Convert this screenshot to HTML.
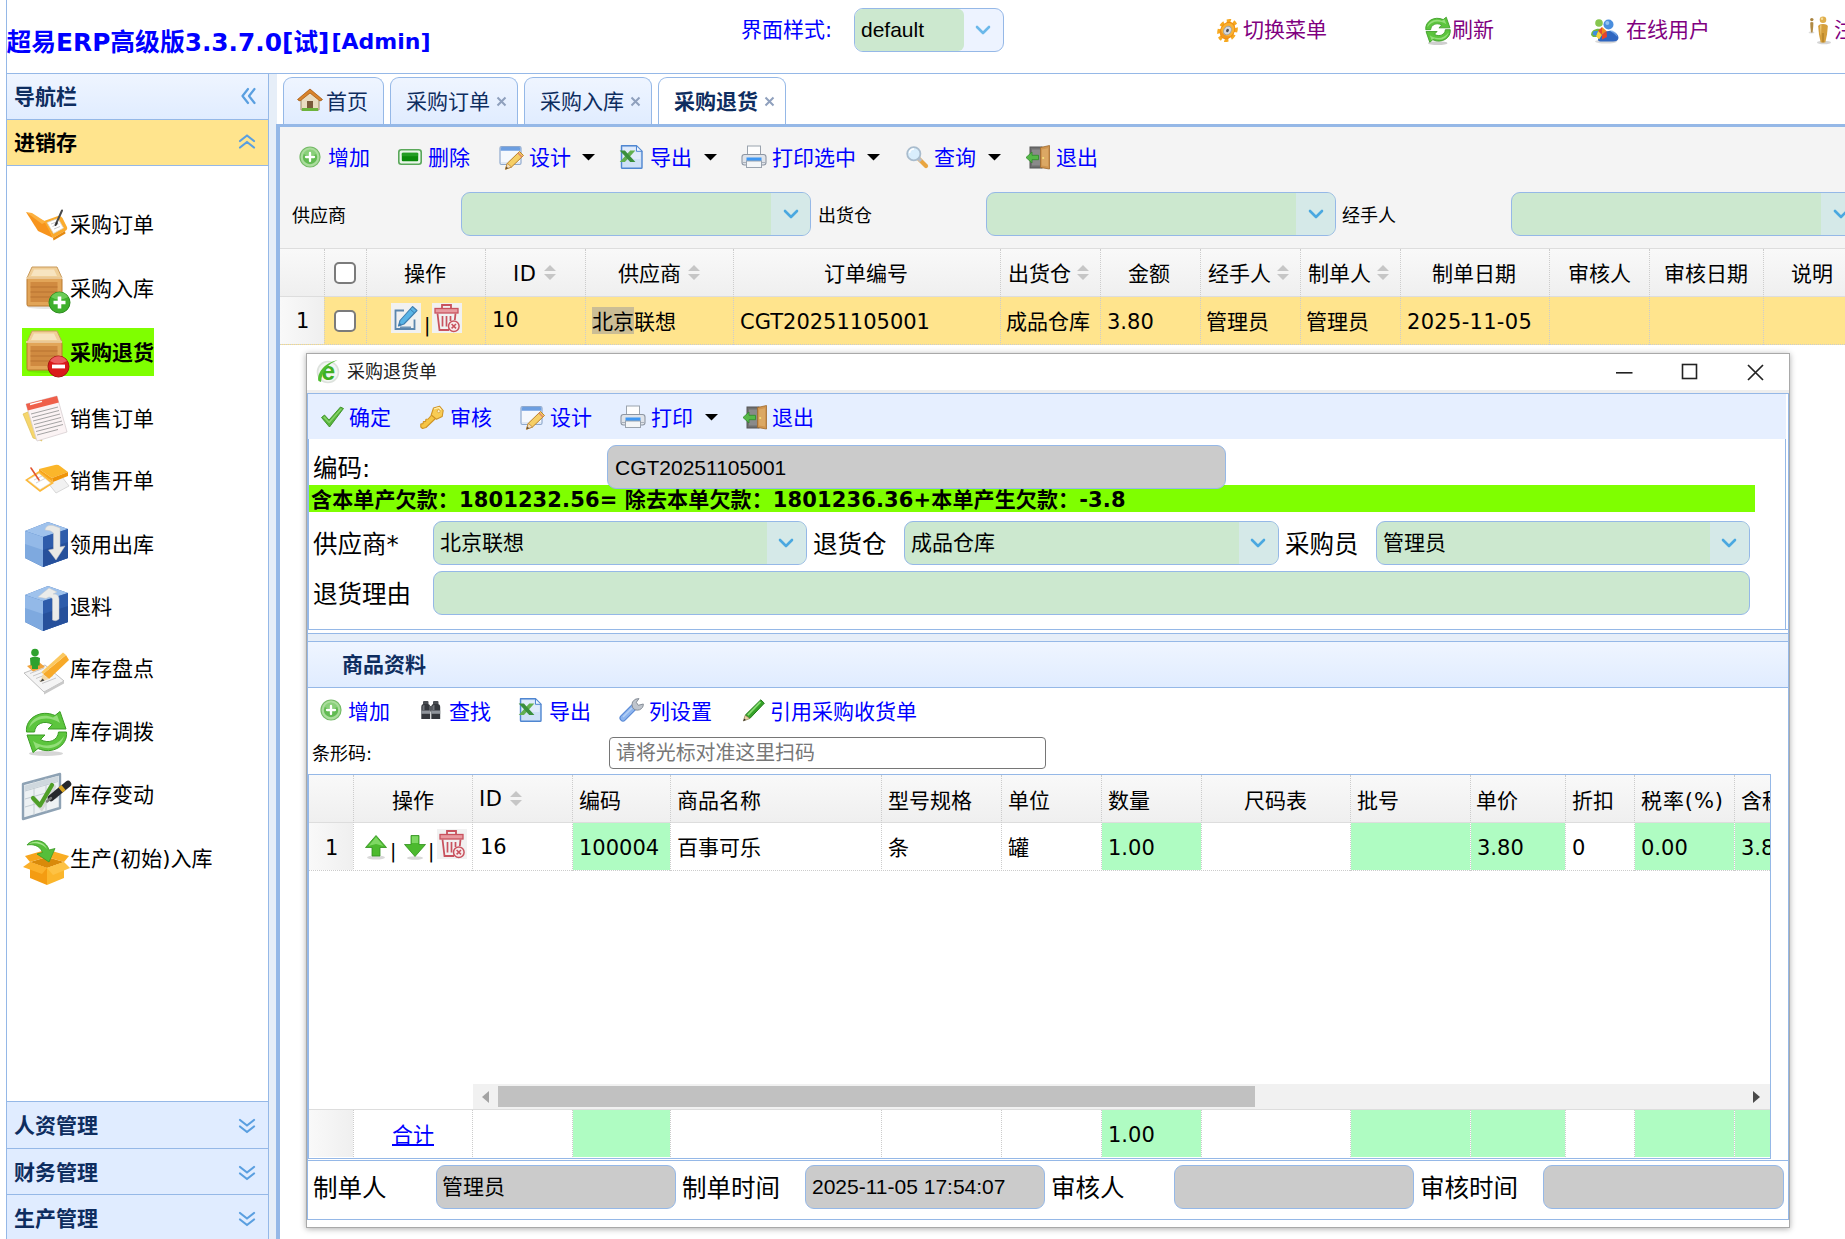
<!DOCTYPE html>
<html lang="zh-CN">
<head>
<meta charset="utf-8">
<title>超易ERP高级版</title>
<style>
*{box-sizing:border-box;margin:0;padding:0}
html,body{width:1845px;height:1239px;overflow:hidden;background:#fff}
body{position:relative;font-family:"DejaVu Sans","Noto Sans CJK SC",sans-serif;font-size:21px;color:#000;line-height:1}
.a{position:absolute}
.t{position:absolute;white-space:nowrap;line-height:1}
.ar{font-family:"Liberation Sans","Noto Sans CJK SC",sans-serif}
.b{font-weight:bold}
.blue{color:#0000ff}
.pur{color:#800080}
.nv{color:#0e2d5f}
svg{position:absolute;display:block;overflow:visible}
.acc{border-bottom:1px solid #95b8e7;background:linear-gradient(#eff5ff,#e0ecff)}
.tab{border:1px solid #95b8e7;border-bottom:none;border-radius:9px 9px 0 0;background:linear-gradient(#eff5ff,#e0ecff)}
.cb{border:1px solid #95b8e7;border-radius:9px;background:#cce8cf;overflow:hidden}
.gray{border:1px solid #95b8e7;border-radius:9px;background:#cbcbcb}
.gh{background:linear-gradient(#f9f9f9,#efefef)}
.vs{position:absolute;width:0;border-left:1px dotted #ccc}
.chk{border:2px solid #7b7b7b;border-radius:5px;background:#fff}
</style>
</head>
<body>
<!-- header -->
<div class="a" style="left:6px;top:0px;width:1px;height:1239px;background:#95b8e7"></div>
<div class="a" style="left:6px;top:73px;width:1839px;height:1px;background:#95b8e7"></div>
<div class="t b blue" style="left:6.5px;top:30.6px;font-size:24.8px;">超易ERP高级版3.3.7.0[试]</div>
<div class="t b blue" style="left:331.5px;top:31.4px;font-size:22px;">[Admin]</div>
<div class="t blue" style="left:741px;top:20.0px;font-size:21px;">界面样式:</div>
<div class="a cb" style="left:854px;top:8px;width:150px;height:44px;background:#edf3ff"><div class="a" style="left:0;top:0;width:109px;height:42px;background:#cce8cf;border-radius:0 6px 6px 0"></div></div>
<div class="t ar" style="left:861px;top:19.2px;font-size:21px;">default</div>
<svg style="left:975px;top:23.5px" width="16" height="12" viewBox="0 0 16 12"><path d="M2 3 L8 9 L14 3" fill="none" stroke="#6bb8ea" stroke-width="2.6" stroke-linecap="round" stroke-linejoin="round"/></svg>
<svg style="left:1215px;top:18px" width="25" height="25" viewBox="0 0 25 25"><g transform="translate(12.500 12.500) rotate(32) scale(.78 1)"><circle r="9" fill="none" stroke="#f6a81f" stroke-width="6.500" stroke-dasharray="4.100 2.970"/><circle r="8.600" fill="#f9b233"/><circle r="8.600" fill="none" stroke="#ee8f12" stroke-width="1.200"/><path d="M-8 2 A8.300 8.300 0 0 0 8 2 A9 6 0 0 1 -8 2Z" fill="#f08a14" opacity=".7"/><circle r="4.600" fill="#d5d8de" stroke="#9a9fa8" stroke-width="1"/><circle r="1.700" fill="#4a4d55"/></g></svg>
<div class="t pur" style="left:1243px;top:20.2px;font-size:21px;">切换菜单</div>
<svg style="left:1422.5px;top:14.5px" width="30" height="30" viewBox="0 0 49 49"><ellipse cx="24" cy="46" rx="16" ry="3" fill="#cfcfcf"/><path d="M4.500 24 C3 10 19 1 33 7.500 L38 3.500 L44 21 L26 21 L30.500 16.500 C22 11.500 13 16 12.500 24 Z" fill="#5cc53d" stroke="#3d9d27" stroke-width="1.400" stroke-linejoin="round"/><path d="M7 20 C9 10 20 5 31 9.500 L35 7 L38 15 C28 8 14 9 7 20Z" fill="#a6e58e" opacity=".75"/><g transform="rotate(180 24.500 24)"><path d="M4.500 24 C3 10 19 1 33 7.500 L38 3.500 L44 21 L26 21 L30.500 16.500 C22 11.500 13 16 12.500 24 Z" fill="#5cc53d" stroke="#3d9d27" stroke-width="1.400" stroke-linejoin="round"/><path d="M7 20 C9 10 20 5 31 9.500 L35 7 L38 15 C28 8 14 9 7 20Z" fill="#a6e58e" opacity=".75"/></g></svg>
<div class="t pur" style="left:1452px;top:20.2px;font-size:21px;">刷新</div>
<svg style="left:1589px;top:18px" width="30" height="26" viewBox="0 0 30 26"><ellipse cx="17" cy="23.500" rx="11" ry="2" fill="#d9d9d9"/><circle cx="10" cy="5" r="3.800" fill="#86c64e"/><path d="M2 17 C2 8.500 17 8.500 17 17 L15 19 L4 19 Z" fill="#72b83f"/><circle cx="19.500" cy="6.500" r="5" fill="#4a8ede"/><circle cx="18.300" cy="5" r="2" fill="#a8d0f5" opacity=".8"/><path d="M9 22 C8 11 29 10 29.500 20 Q29 23.500 24 23.500 L13 23.500 Q9.500 23.500 9 22Z" fill="#2f66c0"/><path d="M20 12 C25 12 28 15 28.500 19 C25 15 22 14 20 12Z" fill="#7fb2ee" opacity=".7"/><path d="M13 9 L9 13 L13 17Z" fill="#e64a2a"/><path d="M13 9 L17.500 13 L13 17Z" fill="#f28c1a"/><path d="M9 13 L13 17 L10 21.500 L7 18Z" fill="#f7d23a"/><path d="M13 17 L17.500 13 L18 19 L13 21.500Z" fill="#e8442a"/><path d="M4.500 13 L9 13 L7 18 L3.500 16.500Z" fill="#3f8fe0"/></svg>
<div class="t pur" style="left:1626px;top:20.2px;font-size:21px;">在线用户</div>
<svg style="left:1806px;top:16px" width="26" height="29" viewBox="0 0 26 29"><ellipse cx="18" cy="26.500" rx="7" ry="1.700" fill="#d5d5d5"/><ellipse cx="5.500" cy="16.500" rx="3" ry=".9" fill="#ddd"/><circle cx="5.800" cy="3.600" r="1.700" fill="#a8823e"/><path d="M4.200 6.500 Q5.800 5.500 7.400 6.500 L7.200 11 L6.600 16.500 L5 16.500 L4.400 11Z" fill="#b08a44"/><circle cx="17" cy="3.800" r="3.300" fill="#dfae4c"/><circle cx="16" cy="2.800" r="1.200" fill="#f6dc9a"/><path d="M12.200 10.500 Q12.200 8 17 8 Q21.800 8 21.800 10.500 L21 18.500 L19.300 26.500 L14.700 26.500 L13 18.500 Z" fill="#d59f3c"/><path d="M14 10 Q14 9 15.500 9 L15 20 L14.500 18Z" fill="#f3d387" opacity=".8"/><path d="M17 17 L17 26.500" stroke="#a4741f" stroke-width="1"/></svg>
<div class="t pur" style="left:1834px;top:20.2px;font-size:21px;">注销</div>
<!-- sidebar -->
<div class="a" style="left:268px;top:74px;width:1px;height:1165px;background:#95b8e7"></div>
<div class="a acc" style="left:7px;top:74px;width:261px;height:46px;"></div>
<div class="t b nv" style="left:14px;top:87.0px;font-size:21px;">导航栏</div>
<svg style="left:240px;top:87px" width="18" height="18" viewBox="0 0 18 18"><path d="M8 2 L2.500 9 L8 16 M14.500 2 L9 9 L14.500 16" fill="none" stroke="#5a9fe0" stroke-width="2.200" stroke-linejoin="round" stroke-linecap="round"/></svg>
<div class="a acc" style="left:7px;top:120px;width:261px;height:46px;background:#ffe48d"></div>
<div class="t b" style="left:14px;top:133.2px;font-size:21px;">进销存</div>
<svg style="left:238px;top:133px" width="18" height="18" viewBox="0 0 18 18"><path d="M2 8 L9 2.500 L16 8 M2 14.500 L9 9 L16 14.500" fill="none" stroke="#5a9fe0" stroke-width="2.200" stroke-linejoin="round" stroke-linecap="round"/></svg>
<div class="a" style="left:22px;top:328px;width:132px;height:48px;background:#7fff00"></div>
<div class="t " style="left:70px;top:215.4px;font-size:21px;">采购订单</div>
<div class="t " style="left:70px;top:278.5px;font-size:21px;">采购入库</div>
<div class="t b" style="left:70px;top:342.5px;font-size:21px;">采购退货</div>
<div class="t " style="left:70px;top:408.5px;font-size:21px;">销售订单</div>
<div class="t " style="left:70px;top:470.5px;font-size:21px;">销售开单</div>
<div class="t " style="left:70px;top:534.5px;font-size:21px;">领用出库</div>
<div class="t " style="left:70px;top:596.5px;font-size:21px;">退料</div>
<div class="t " style="left:70px;top:659.3px;font-size:21px;">库存盘点</div>
<div class="t " style="left:70px;top:722.1px;font-size:21px;">库存调拨</div>
<div class="t " style="left:70px;top:785.1px;font-size:21px;">库存变动</div>
<div class="t " style="left:70px;top:848.8px;font-size:21px;">生产(初始)入库</div>
<svg style="left:22px;top:200px" width="48" height="48" viewBox="0 0 48 48"><path d="M4 12 L24 22 L31 38 L16 31 Z" fill="#f7941d"/><path d="M4 12 L10 13 L24 22 L20 24 Z" fill="#fbb040"/><path d="M22 21 L36 16 Q39 15.5 40.5 18 L45 27 Q46 29.5 43 31 L31 38 Z" fill="#fbab2c"/><path d="M31 38 L43 31 L43.5 33.5 L31.5 40.5 Z" fill="#e58a12"/><path d="M25 22.5 L36 18.5 L41.5 28 L31.5 33.5 Z" fill="#fff" stroke="#d9d2c2" stroke-width=".8"/><path d="M29 24 L35 21.8 M30.5 26.5 L36.5 24 M32 29 L38 26.5" stroke="#bbb" stroke-width=".8"/><path d="M40 10.500 L33.500 25" stroke="#4a4a4a" stroke-width="2" stroke-linecap="round"/><path d="M34.600 22 L33 26.200 L36 23 Z" fill="#222"/></svg>
<svg style="left:22px;top:264px" width="48" height="48" viewBox="0 0 48 48"><ellipse cx="23" cy="42.500" rx="18" ry="2.500" fill="#e6e6e6"/><path d="M10 3 H35 L40 14 H5 Z" fill="#f0cf98" stroke="#c99a5b" stroke-width="1"/><path d="M12 5.5 H32 L35 12 H9 Z" fill="#f7e4c0"/><rect x="5" y="14" width="35" height="28" rx="1.500" fill="#e2a558" stroke="#b9782f" stroke-width="1"/><rect x="8.5" y="18" width="27" height="20" fill="#d08a40"/><path d="M8.5 23 H35.5 M8.5 28 H35.5 M8.5 33 H35.5" stroke="#b87330" stroke-width="1"/><path d="M4 14 H40" stroke="#f3d9ae" stroke-width="1.5"/><circle cx="37.5" cy="38.5" r="10.5" fill="#3fb02c" stroke="#2b8a1c" stroke-width="1"/><path d="M29 33 A10 10 0 0 1 46 33 Q37 38 29 33Z" fill="#7fd86a" opacity=".7"/><path d="M31.5 38.5 H43.5 M37.5 32.5 V44.5" stroke="#fff" stroke-width="3.6"/></svg>
<svg style="left:22px;top:328px" width="48" height="48" viewBox="0 0 48 48"><ellipse cx="23" cy="42.500" rx="18" ry="2.500" fill="#72e800"/><path d="M10 3 H35 L40 14 H5 Z" fill="#f0cf98" stroke="#c99a5b" stroke-width="1"/><path d="M12 5.5 H32 L35 12 H9 Z" fill="#f7e4c0"/><rect x="5" y="14" width="35" height="28" rx="1.500" fill="#e2a558" stroke="#b9782f" stroke-width="1"/><rect x="8.5" y="18" width="27" height="20" fill="#d08a40"/><path d="M8.5 23 H35.5 M8.5 28 H35.5 M8.5 33 H35.5" stroke="#b87330" stroke-width="1"/><path d="M4 14 H40" stroke="#f3d9ae" stroke-width="1.5"/><circle cx="36.5" cy="38.5" r="10.5" fill="#d91a1a" stroke="#a80f0f" stroke-width="1"/><path d="M28 33 A10 10 0 0 1 45 33 Q36 38 28 33Z" fill="#f47a7a" opacity=".7"/><path d="M30 38.5 H43" stroke="#fff" stroke-width="3.8"/></svg>
<svg style="left:22px;top:394px" width="48" height="48" viewBox="0 0 48 48"><path d="M1 20 L8 17 L20 47 L11 44 Z" fill="#f6d66c" stroke="#d9b84a" stroke-width=".6"/><path d="M4 10 L35 2 L45 38 L15 47 Z" fill="#fbf3f4" stroke="#d8cfd2" stroke-width=".8"/><path d="M4 10 L35 2 L36.8 8.4 L5.8 16.4 Z" fill="#ef5f4a"/><path d="M8 10.5 L20 7.4" stroke="#fff" stroke-width="1.4"/><g stroke="#9a9a9a" stroke-width=".9"><path d="M9 20 L36 13"/><path d="M10 23.5 L37 16.5"/><path d="M11 27 L38 20"/><path d="M12 30.5 L39 23.5"/><path d="M13 34 L40 27"/><path d="M14 37.500 L41 30.500"/><path d="M15 41 L36 35.500"/></g></svg>
<svg style="left:22px;top:456px" width="48" height="48" viewBox="0 0 48 48"><path d="M26 27 L40 21 L47 30 L34 37 Z" fill="#f1f1f1" stroke="#cfcfcf" stroke-width=".8"/><path d="M17 13 L33 9 Q36 8.300 38 10 L46 16 L30 22 Z" fill="#fbb62a"/><path d="M30 22 L46 16 L46 20 L31 26 Z" fill="#ef9408"/><path d="M17 13 L30 22 L31 26 L17 17 Z" fill="#f7a51a"/><path d="M3 24 L17 15 L32 27 L18 36 Z" fill="#fdb93a"/><path d="M6 24 L17 17.500 L28.500 27 L18 33.500 Z" fill="#fff" stroke="#e6e0d4" stroke-width=".6"/><path d="M12 24 L20 20 M14 27 L23 22.500" stroke="#c8c8c8" stroke-width=".8"/><path d="M9 12 L17 24" stroke="#e2552f" stroke-width="1.6" stroke-linecap="round"/></svg>
<svg style="left:22px;top:520px" width="48" height="48" viewBox="0 0 48 48"><path d="M3 11 L26 2 L46 9 L46 38 L21 47 L3 38 Z" fill="#3f6fba"/><path d="M3 11 L26 2 L46 9 L21 17 Z" fill="#9fc2ec"/><path d="M3 11 L21 17 L21 47 L3 38 Z" fill="#7ea9df"/><path d="M3 11 L21 17 L21 30 L3 24 Z" fill="#9cc0eb" opacity=".7"/><path d="M21 17 L46 9 L46 38 L21 47 Z" fill="#2e5cab"/><path d="M21 30 L46 22 L46 38 L21 47 Z" fill="#244d97" opacity=".8"/><path d="M23 10 Q24 4.500 31 5.500 L38 8 L38 27 L43 26 L34 40 L26.500 30 L31.500 29 L31.500 13 Q29 10 23 10 Z" fill="#e9e9e6" stroke="#c9c9c9" stroke-width=".5"/></svg>
<svg style="left:22px;top:584px" width="48" height="48" viewBox="0 0 48 48"><path d="M3 11 L26 2 L46 9 L46 38 L21 47 L3 38 Z" fill="#3f6fba"/><path d="M3 11 L26 2 L46 9 L21 17 Z" fill="#9fc2ec"/><path d="M3 11 L21 17 L21 47 L3 38 Z" fill="#7ea9df"/><path d="M3 11 L21 17 L21 30 L3 24 Z" fill="#9cc0eb" opacity=".7"/><path d="M21 17 L46 9 L46 38 L21 47 Z" fill="#2e5cab"/><path d="M21 30 L46 22 L46 38 L21 47 Z" fill="#244d97" opacity=".8"/><path d="M16 13 L27 4 L35 8 L31 10 Q37 10 37 15 L37 35 Q34 38 30.500 36 L30.500 15 Q30 13 27 13 L24 14.500 Z" fill="#ececea" stroke="#c9c9c9" stroke-width=".5"/></svg>
<svg style="left:22px;top:646px" width="48" height="48" viewBox="0 0 48 48"><path d="M2 27 L23 19 L42 35 L22 46 Z" fill="#f4f4f4" stroke="#b9b9b9" stroke-width=".9"/><path d="M22 46 L42 35 L42 37.500 L22 48.500 Z" fill="#c9c9c9"/><path d="M8 27.500 L22 22 M11 30 L25 24.500 M14 32.500 L28 27 M17 35 L31 29.500 M20 37.500 L34 32" stroke="#bdbdbd" stroke-width=".8"/><path d="M5 20 L17 16 L23 21 L11 25.500 Z" fill="#f0a23a"/><circle cx="13" cy="6.500" r="3.800" fill="#2da12d"/><path d="M8 12 Q13 9 18 12 L17.500 19.500 L16 19.500 L16 23 L10 23 L10 19.500 L8.500 19.500 Z" fill="#2da12d"/><path d="M44 9 L47 14 L27 33 L21 28 Z" fill="#f7a928"/><path d="M41 6.500 L44 9 L21 28 L19.500 26 Z" fill="#fbc860"/><path d="M21 28 L27 33 L18 36 Z" fill="#f3d9a8"/><path d="M18 36 L20.500 32.500 L22.500 34.500 Z" fill="#444"/></svg>
<svg style="left:22px;top:708px" width="48" height="48" viewBox="0 0 48 48"><ellipse cx="24" cy="45.500" rx="17" ry="2.500" fill="#d6d6d6"/><path d="M4.500 24 C3 10 19 1 33 7.500 L38 3.500 L44 21 L26 21 L30.500 16.500 C22 11.500 13 16 12.500 24 Z" fill="#5cc53d" stroke="#3d9d27" stroke-width="1" stroke-linejoin="round"/><path d="M7 20 C9 10 20 5 31 9.500 L35 7 L38 15 C28 8 14 9 7 20Z" fill="#a6e58e" opacity=".75"/><g transform="rotate(180 24.500 24)"><path d="M4.500 24 C3 10 19 1 33 7.500 L38 3.500 L44 21 L26 21 L30.500 16.500 C22 11.500 13 16 12.500 24 Z" fill="#5cc53d" stroke="#3d9d27" stroke-width="1" stroke-linejoin="round"/><path d="M7 20 C9 10 20 5 31 9.500 L35 7 L38 15 C28 8 14 9 7 20Z" fill="#a6e58e" opacity=".75"/></g></svg>
<svg style="left:22px;top:773px" width="48" height="48" viewBox="0 0 48 48"><path d="M1 11 L38 1 L38 35 L1 46 Z" fill="#edf1f3" stroke="#8ea2b4" stroke-width="2.400" stroke-linejoin="round"/><path d="M3 18 L36 8.500 M3 26 L36 16.500 M3 34 L36 24.500 M12 8.500 L12 42 M24 5 L24 38.500" stroke="#c3ccd3" stroke-width="1"/><path d="M3 12.500 L36 3 L36 8 L3 17.500Z" fill="#cfd8de"/><path d="M11 25 L18 32.500 L30 12" fill="none" stroke="#cfd3d0" stroke-width="5" stroke-linecap="round" opacity=".8" transform="translate(1.500 2)"/><path d="M11 25 L18 32.500 L30 12" fill="none" stroke="#4f9f28" stroke-width="4.200" stroke-linecap="round" stroke-linejoin="round"/><path d="M46 11 L29 25" stroke="#26282c" stroke-width="6.500" stroke-linecap="round"/><path d="M41.500 14.600 L38.500 17.100" stroke="#d9a522" stroke-width="6.500"/><path d="M29 25 L25 28.500" stroke="#777" stroke-width="2.500" stroke-linecap="round"/></svg>
<svg style="left:22px;top:838px" width="48" height="48" viewBox="0 0 48 48"><path d="M8 24 L25 19 L42 24 L25 30 Z" fill="#d98a0a"/><path d="M8 24 L25 30 L25 47 L8 40 Z" fill="#f49c12"/><path d="M25 30 L42 24 L42 40 L25 47 Z" fill="#fbb62c"/><path d="M8 24 L25 30 L20 36 L1 29 Z" fill="#fbb02a"/><path d="M25 30 L42 24 L48 30 L31 37 Z" fill="#fdc244"/><path d="M8 24 L25 19 L20 13 L3 18 Z" fill="#f7a51c"/><path d="M42 24 L25 19 L30 13 L47 18 Z" fill="#f9ad22"/><path d="M5 7 C10 0 24 1 27 12 L33 10.500 L27 24 L15 16 L20.500 14.500 C18 7 10 6 5 7 Z" fill="#56be3a" stroke="#3a9a25" stroke-width=".8" stroke-linejoin="round"/><path d="M7 6 C12 2 22 3 25 11 C20 5 12 4.500 7 6Z" fill="#a6e58e"/></svg>
<div class="a" style="left:7px;top:1101px;width:261px;height:48px;background:#e0ecff;border-top:1px solid #95b8e7;border-bottom:none"></div>
<div class="t b nv" style="left:14px;top:1116.0px;font-size:21px;">人资管理</div>
<svg style="left:238px;top:1117px" width="18" height="18" viewBox="0 0 18 18"><path d="M2 3 L9 8.500 L16 3 M2 9.500 L9 15 L16 9.500" fill="none" stroke="#5a9fe0" stroke-width="2.200" stroke-linejoin="round" stroke-linecap="round"/></svg>
<div class="a" style="left:7px;top:1148px;width:261px;height:47px;background:#e0ecff;border-top:1px solid #95b8e7;border-bottom:none"></div>
<div class="t b nv" style="left:14px;top:1163.0px;font-size:21px;">财务管理</div>
<svg style="left:238px;top:1164px" width="18" height="18" viewBox="0 0 18 18"><path d="M2 3 L9 8.500 L16 3 M2 9.500 L9 15 L16 9.500" fill="none" stroke="#5a9fe0" stroke-width="2.200" stroke-linejoin="round" stroke-linecap="round"/></svg>
<div class="a" style="left:7px;top:1194px;width:261px;height:46px;background:#e0ecff;border-top:1px solid #95b8e7;border-bottom:none"></div>
<div class="t b nv" style="left:14px;top:1209.0px;font-size:21px;">生产管理</div>
<svg style="left:238px;top:1210px" width="18" height="18" viewBox="0 0 18 18"><path d="M2 3 L9 8.500 L16 3 M2 9.500 L9 15 L16 9.500" fill="none" stroke="#5a9fe0" stroke-width="2.200" stroke-linejoin="round" stroke-linecap="round"/></svg>
<!-- tabs -->
<div class="a" style="left:269px;top:74px;width:8px;height:1165px;background:#e6eef8"></div>
<div class="a" style="left:276px;top:124px;width:4px;height:1115px;background:#95b8e7"></div>
<div class="a tab" style="left:283px;top:77px;width:101px;height:48px;"></div>
<svg style="left:297px;top:88px" width="26" height="24" viewBox="0 0 26 24"><path d="M13 2 L1 12 L4 12 L4 22 L22 22 L22 12 L25 12 Z" fill="#e9dcc0" stroke="#a08c66" stroke-width="1"/><path d="M13 1 L0.5 11.5 L3 13 L13 5 L23 13 L25.5 11.5 Z" fill="#d9832a" stroke="#a85a12" stroke-width=".8"/><rect x="10" y="13" width="6" height="9" fill="#7a5a3a"/><rect x="5" y="20" width="16" height="3" fill="#6db33c"/></svg>
<div class="t nv" style="left:326px;top:92.2px;font-size:21px;">首页</div>
<div class="a tab" style="left:390px;top:77px;width:128px;height:48px;"></div>
<div class="t nv" style="left:406px;top:92.2px;font-size:21px;">采购订单</div>
<svg style="left:496px;top:96px" width="11" height="11" viewBox="0 0 11 11"><path d="M1.5 1.5 L9.5 9.5 M9.5 1.5 L1.5 9.5" stroke="#8fa0bd" stroke-width="2" fill="none"/></svg>
<div class="a tab" style="left:524px;top:77px;width:128px;height:48px;"></div>
<div class="t nv" style="left:540px;top:92.2px;font-size:21px;">采购入库</div>
<svg style="left:630px;top:96px" width="11" height="11" viewBox="0 0 11 11"><path d="M1.5 1.5 L9.5 9.5 M9.5 1.5 L1.5 9.5" stroke="#8fa0bd" stroke-width="2" fill="none"/></svg>
<div class="a tab" style="left:658px;top:77px;width:128px;height:48px;background:#fff"></div>
<div class="t b nv" style="left:674px;top:92.2px;font-size:21px;">采购退货</div>
<svg style="left:764px;top:96px" width="11" height="11" viewBox="0 0 11 11"><path d="M1.5 1.5 L9.5 9.5 M9.5 1.5 L1.5 9.5" stroke="#8fa0bd" stroke-width="2" fill="none"/></svg>
<div class="a" style="left:277px;top:124px;width:1568px;height:3px;background:#95b8e7"></div>
<!-- toolbar -->
<div class="a" style="left:280px;top:127px;width:1565px;height:121px;background:#f4f4f4"></div>
<svg style="left:299px;top:145.5px" width="22" height="22" viewBox="0 0 22 22"><circle cx="11" cy="11" r="10" fill="#aadd9c" stroke="#74ba66" stroke-width="1.200"/><circle cx="11" cy="11" r="7.200" fill="#62bb52"/><path d="M4.500 8 A7 7 0 0 1 17.500 8 Q11 11 4.500 8Z" fill="#93d685" opacity=".8"/><path d="M7 11 H15 M11 7 V15" stroke="#fff" stroke-width="2.300" stroke-linecap="round"/></svg>
<svg style="left:398px;top:149px" width="24" height="16" viewBox="0 0 24 16"><rect x=".8" y=".8" width="22.400" height="14.400" rx="2.500" fill="#eaf6ea" stroke="#5aa85a" stroke-width="1.600"/><rect x="3.800" y="3.800" width="16.400" height="8.400" rx="1" fill="#0b8a0b"/><rect x="3.800" y="3.800" width="16.400" height="3.500" rx="1" fill="#2fa52f" opacity=".7"/></svg>
<svg style="left:498.5px;top:145px" width="25" height="25" viewBox="0 0 25 25"><rect x="1" y="1.500" width="21" height="18" rx="1.500" fill="#f5f8fd" stroke="#8fa9cd" stroke-width="1.200"/><path d="M1.600 3 Q1.600 2 3 2 H20 Q21.400 2 21.400 3 V5.800 H1.600Z" fill="#6c9ee0"/><path d="M2 17 H21 V19 H2Z" fill="#dfe8f5"/><path d="M20.500 6.500 L24.500 10.500 L12.500 22 L6.500 24.200 L8.300 18.300 Z" fill="#f6cf66" stroke="#b9812a" stroke-width="1" stroke-linejoin="round"/><path d="M19 8 L23 12" stroke="#e08a6a" stroke-width="1.600"/><path d="M6.500 24.200 L8.300 18.300 L12.500 22 Z" fill="#f2dfc0" stroke="#b9812a" stroke-width=".7"/><path d="M6.500 24.200 L7.400 21.500 L9.200 23.200Z" fill="#5a4a3a"/></svg>
<svg style="left:619px;top:144.5px" width="24" height="24" viewBox="0 0 24 24"><path d="M2.500 .8 H17.500 L23 6.300 V22.500 Q23 23.300 22.200 23.300 H3.300 Q2.500 23.300 2.500 22.500 Z" fill="#cfe1f7" stroke="#4f86d1" stroke-width="1.400" stroke-linejoin="round"/><path d="M4 2.300 H16.500 V7.300 H21.500 V14 H4Z" fill="#e3eefb" opacity=".8"/><path d="M17.500 .8 V6.300 H23 Z" fill="#f2f7fe" stroke="#4f86d1" stroke-width="1" stroke-linejoin="round"/><path d="M16.400 5.500 H11.200 L.7 17 H5.900 Z" fill="#62b050"/><path d="M.7 5.500 H5.900 L16.400 17 H11.200 Z" fill="#3a8f3c"/></svg>
<svg style="left:741px;top:145px" width="26" height="23.5" viewBox="0 0 26 23.500"><rect x="6.500" y="1" width="13" height="10" fill="#fdfdfd" stroke="#9aa3ae" stroke-width="1"/><rect x="1" y="9.500" width="24" height="10.500" rx="2.500" fill="#dfe3e9" stroke="#8d96a3" stroke-width="1.100"/><rect x="5.500" y="12.500" width="15" height="4" fill="#3f97f2"/><rect x="5.500" y="16" width="15" height="6.500" fill="#f4f6f8" stroke="#9aa3ae" stroke-width="1"/><path d="M1.500 17.500 H5 M21 17.500 H24.500" stroke="#aab1bb" stroke-width="1"/></svg>
<svg style="left:906px;top:146px" width="22" height="22" viewBox="0 0 22 22"><path d="M12.500 12.500 L20 20" stroke="#e9a540" stroke-width="4.200" stroke-linecap="round"/><path d="M12.500 12.500 L15 15" stroke="#b9bec6" stroke-width="3.600"/><circle cx="7.800" cy="7.800" r="6.600" fill="#d9eefc" stroke="#a9bccd" stroke-width="1.800"/><path d="M3.500 7 A4.500 4.500 0 0 1 8 3" stroke="#fff" stroke-width="1.600" fill="none"/></svg>
<svg style="left:1026px;top:144.5px" width="24" height="24.5" viewBox="0 0 24 24.500"><rect x="4" y="2" width="12" height="21" fill="#707070" stroke="#555" stroke-width="1"/><rect x="6" y="4.500" width="9" height="16" fill="#8a8a8a"/><path d="M14.500 2.500 L23.500 0.500 L23.500 24 L14.500 22.500 Z" fill="#cf9550" stroke="#a06a2c" stroke-width=".8"/><path d="M16 4.500 L22 3.200 L22 21.500 L16 20.500Z" fill="#dba864"/><circle cx="17.200" cy="13" r="1.100" fill="#f7e17a"/><path d="M0 12.500 L6 7 L6 10.300 L12.500 10.300 L12.500 14.700 L6 14.700 L6 18 Z" fill="#55b848" stroke="#2f8a2a" stroke-width=".8" stroke-linejoin="round"/></svg>
<div class="t blue" style="left:328px;top:148.1px;font-size:21px;">增加</div>
<div class="t blue" style="left:428px;top:148.1px;font-size:21px;">删除</div>
<div class="t blue" style="left:529px;top:148.1px;font-size:21px;">设计</div>
<div class="t blue" style="left:650px;top:148.1px;font-size:21px;">导出</div>
<div class="t blue" style="left:772px;top:148.1px;font-size:21px;">打印选中</div>
<div class="t blue" style="left:934px;top:148.1px;font-size:21px;">查询</div>
<div class="t blue" style="left:1056px;top:148.1px;font-size:21px;">退出</div>
<svg style="left:582px;top:154px" width="14" height="8" viewBox="0 0 14 8"><path d="M0 0H13L6.5 6.5Z" fill="#000"/></svg>
<svg style="left:704px;top:154px" width="14" height="8" viewBox="0 0 14 8"><path d="M0 0H13L6.5 6.5Z" fill="#000"/></svg>
<svg style="left:867px;top:154px" width="14" height="8" viewBox="0 0 14 8"><path d="M0 0H13L6.5 6.5Z" fill="#000"/></svg>
<svg style="left:988px;top:154px" width="14" height="8" viewBox="0 0 14 8"><path d="M0 0H13L6.5 6.5Z" fill="#000"/></svg>
<div class="t " style="left:292px;top:206.9px;font-size:18px;">供应商</div>
<div class="a cb" style="left:461px;top:192px;width:350px;height:44px;"><div class="a" style="right:0;top:0;width:39px;height:42px;background:#d5e9e8"></div></div>
<svg style="left:783px;top:207.5px" width="16" height="12" viewBox="0 0 16 12"><path d="M2 3 L8 9 L14 3" fill="none" stroke="#4aa8e0" stroke-width="2.6" stroke-linecap="round" stroke-linejoin="round"/></svg>
<div class="t " style="left:818px;top:206.9px;font-size:18px;">出货仓</div>
<div class="a cb" style="left:986px;top:192px;width:350px;height:44px;"><div class="a" style="right:0;top:0;width:39px;height:42px;background:#d5e9e8"></div></div>
<svg style="left:1308px;top:207.5px" width="16" height="12" viewBox="0 0 16 12"><path d="M2 3 L8 9 L14 3" fill="none" stroke="#4aa8e0" stroke-width="2.6" stroke-linecap="round" stroke-linejoin="round"/></svg>
<div class="t " style="left:1342px;top:206.9px;font-size:18px;">经手人</div>
<div class="a cb" style="left:1511px;top:192px;width:350px;height:44px;"><div class="a" style="right:0;top:0;width:39px;height:42px;background:#d5e9e8"></div></div>
<svg style="left:1833px;top:207.5px" width="16" height="12" viewBox="0 0 16 12"><path d="M2 3 L8 9 L14 3" fill="none" stroke="#4aa8e0" stroke-width="2.6" stroke-linecap="round" stroke-linejoin="round"/></svg>
<!-- main grid -->
<div class="a" style="left:280px;top:248px;width:1565px;height:106px;background:#fff"></div>
<div class="a gh" style="left:280px;top:248px;width:1565px;height:49px;border-top:1px solid #ddd;border-bottom:1px solid #ddd"></div>
<div class="a" style="left:280px;top:297px;width:1565px;height:48px;background:#ffe48d;border-bottom:1px dotted #ccc"></div>
<div class="a" style="left:280px;top:297px;width:44px;height:47px;background:linear-gradient(90deg,#f9f9f9,#efefef)"></div>
<div class="vs" style="left:324px;top:249px;height:96px"></div>
<div class="vs" style="left:366px;top:249px;height:96px"></div>
<div class="vs" style="left:485px;top:249px;height:96px"></div>
<div class="vs" style="left:585px;top:249px;height:96px"></div>
<div class="vs" style="left:733px;top:249px;height:96px"></div>
<div class="vs" style="left:1000px;top:249px;height:96px"></div>
<div class="vs" style="left:1100px;top:249px;height:96px"></div>
<div class="vs" style="left:1200px;top:249px;height:96px"></div>
<div class="vs" style="left:1300px;top:249px;height:96px"></div>
<div class="vs" style="left:1400px;top:249px;height:96px"></div>
<div class="vs" style="left:1549px;top:249px;height:96px"></div>
<div class="vs" style="left:1649px;top:249px;height:96px"></div>
<div class="vs" style="left:1763px;top:249px;height:96px"></div>
<div class="a chk" style="left:334px;top:262px;width:22px;height:22px;"></div>
<div class="a chk" style="left:334px;top:310px;width:22px;height:22px;"></div>
<div class="t " style="left:404px;top:264.0px;font-size:21px;">操作</div>
<div class="t " style="left:618px;top:264.0px;font-size:21px;">供应商</div>
<div class="t " style="left:824px;top:264.0px;font-size:21px;">订单编号</div>
<div class="t " style="left:1008px;top:264.0px;font-size:21px;">出货仓</div>
<div class="t " style="left:1128px;top:264.0px;font-size:21px;">金额</div>
<div class="t " style="left:1208px;top:264.0px;font-size:21px;">经手人</div>
<div class="t " style="left:1308px;top:264.0px;font-size:21px;">制单人</div>
<div class="t " style="left:1432px;top:264.0px;font-size:21px;">制单日期</div>
<div class="t " style="left:1568px;top:264.0px;font-size:21px;">审核人</div>
<div class="t " style="left:1664px;top:264.0px;font-size:21px;">审核日期</div>
<div class="t " style="left:1791px;top:264.0px;font-size:21px;">说明</div>
<div class="t " style="left:513px;top:263.7px;font-size:21px;letter-spacing:.6px">ID</div>
<svg style="left:544px;top:265px" width="12" height="15" viewBox="0 0 12 15"><path d="M0 6 L6 0 L12 6Z M0 9 L12 9 L6 15Z" fill="#c6c6c6"/></svg>
<svg style="left:688px;top:265px" width="12" height="15" viewBox="0 0 12 15"><path d="M0 6 L6 0 L12 6Z M0 9 L12 9 L6 15Z" fill="#c6c6c6"/></svg>
<svg style="left:1077px;top:265px" width="12" height="15" viewBox="0 0 12 15"><path d="M0 6 L6 0 L12 6Z M0 9 L12 9 L6 15Z" fill="#c6c6c6"/></svg>
<svg style="left:1277px;top:265px" width="12" height="15" viewBox="0 0 12 15"><path d="M0 6 L6 0 L12 6Z M0 9 L12 9 L6 15Z" fill="#c6c6c6"/></svg>
<svg style="left:1377px;top:265px" width="12" height="15" viewBox="0 0 12 15"><path d="M0 6 L6 0 L12 6Z M0 9 L12 9 L6 15Z" fill="#c6c6c6"/></svg>
<div class="t " style="left:296px;top:310.8px;font-size:21px;">1</div>
<div class="t " style="left:492px;top:309.6px;font-size:21px;">10</div>
<div class="a" style="left:592px;top:307px;width:42px;height:27px;background:#cbbd95"></div>
<div class="t " style="left:592px;top:312.0px;font-size:21px;">北京联想</div>
<div class="t " style="left:740px;top:311.5px;font-size:21px;">CGT20251105001</div>
<div class="t " style="left:1006px;top:312.0px;font-size:21px;">成品仓库</div>
<div class="t " style="left:1107px;top:311.5px;font-size:21px;">3.80</div>
<div class="t " style="left:1206px;top:312.0px;font-size:21px;">管理员</div>
<div class="t " style="left:1306px;top:312.0px;font-size:21px;">管理员</div>
<div class="t " style="left:1407px;top:311.5px;font-size:21px;letter-spacing:.3px">2025-11-05</div>
<div class="t " style="left:424px;top:316.2px;font-size:19px;">|</div>
<svg style="left:391px;top:303px" width="30" height="30" viewBox="0 0 30 30"><rect x="0" y="0" width="30" height="30" fill="#f1f1f1"/><path d="M13 7.500 H4.500 V26 H23.500 V16.500" fill="none" stroke="#5b86ad" stroke-width="1.800"/><path d="M21.500 3.500 L26 7.500 L13 21 L7.500 23 L9 17.500 Z" fill="#5ab4e6" stroke="#3f7fb0" stroke-width="1.100" stroke-linejoin="round"/><path d="M19 6 L23.500 10" stroke="#3f7fb0" stroke-width="1"/><path d="M7.500 23 L8.500 19.500 L11 22Z" fill="#3f7fb0"/><path d="M9 24.200 H20" stroke="#5b86ad" stroke-width="1.300"/></svg>
<svg style="left:432px;top:303px" width="30" height="30" viewBox="0 0 30 30"><rect x="0" y="0" width="30" height="30" fill="#f1f1f1"/><path d="M10 5.500 V2 H19 V5.500" fill="none" stroke="#c8525e" stroke-width="1.800"/><rect x="3" y="5.500" width="23" height="4.500" fill="#e89aa0" stroke="#c8525e" stroke-width="1.300"/><path d="M5.500 10.500 L7.500 27 H17" fill="none" stroke="#c8525e" stroke-width="1.800"/><path d="M23.500 10.500 L22.800 17" fill="none" stroke="#c8525e" stroke-width="1.800"/><path d="M10.500 13 V23.500 M14.500 13 V23.500 M18.500 13 V18" stroke="#c8525e" stroke-width="1.700"/><circle cx="21.800" cy="23.200" r="5.300" fill="#f7e9ea" stroke="#c8525e" stroke-width="1.500"/><path d="M19.600 21 L24 25.400 M24 21 L19.600 25.400" stroke="#c8525e" stroke-width="1.500"/></svg>
<!-- dialog -->
<div class="a" style="left:306px;top:353px;width:1484px;height:875px;background:#fff;border:1px solid #a9a9a9;box-shadow:0 1px 6px rgba(0,0,0,.32)"></div>
<svg style="left:315.5px;top:358.5px" width="24" height="26" viewBox="0 0 24 26"><circle cx="12" cy="13" r="10.500" fill="#f2f6f2" stroke="#dde2dd" stroke-width="1.600"/><text x="12.300" y="21.300" text-anchor="middle" font-family="Liberation Sans, sans-serif" font-weight="bold" font-size="25" fill="#3fb022">e</text><path d="M2.500 22 C.5 15 8 4 21.500 1 C12 5 6 12 5 23Z" fill="#4fbe30"/></svg>
<div class="t " style="left:347px;top:362.9px;font-size:18px;color:#222">采购退货单</div>
<svg style="left:1616px;top:372px" width="18" height="3" viewBox="0 0 18 3"><rect x="0" y="0" width="16.500" height="1.600" fill="#222"/></svg>
<svg style="left:1681px;top:363px" width="18" height="18" viewBox="0 0 18 18"><rect x="1.500" y="1.500" width="14" height="14" fill="none" stroke="#222" stroke-width="1.600"/></svg>
<svg style="left:1746px;top:363px" width="19" height="19" viewBox="0 0 19 19"><path d="M2 2 L17 17 M17 2 L2 17" stroke="#222" stroke-width="1.700" fill="none"/></svg>
<div class="a" style="left:307px;top:390px;width:1482px;height:3px;background:#eee"></div>
<div class="a" style="left:307px;top:393px;width:1482px;height:237px;border:1px solid #95b8e7;background:#fff"></div>
<div class="a" style="left:308px;top:439px;width:1px;height:190px;background:#95b8e7"></div>
<div class="a" style="left:308px;top:394px;width:1478px;height:45px;background:#e6efff"></div>
<div class="a" style="left:1785px;top:439px;width:1px;height:190px;background:#95b8e7"></div>
<div class="t blue" style="left:349px;top:407.8px;font-size:21px;">确定</div>
<div class="t blue" style="left:450px;top:407.8px;font-size:21px;">审核</div>
<div class="t blue" style="left:550px;top:407.8px;font-size:21px;">设计</div>
<div class="t blue" style="left:651px;top:407.8px;font-size:21px;">打印</div>
<div class="t blue" style="left:772px;top:407.8px;font-size:21px;">退出</div>
<svg style="left:705px;top:414px" width="14" height="8" viewBox="0 0 14 8"><path d="M0 0H13L6.5 6.5Z" fill="#000"/></svg>
<svg style="left:319.5px;top:405.5px" width="25" height="22" viewBox="0 0 25 22"><path d="M1.500 11.500 L4.500 9 L9 14 L20.500 1 L23.500 2.500 L9.500 21 Z" fill="#58b53c" stroke="#3a8f25" stroke-width=".9" stroke-linejoin="round"/><path d="M3 11.300 L4.600 10.200 L9 15.500 L20.800 2.200 L22 2.900 L9.200 17.500Z" fill="#9ade7d" opacity=".7"/></svg>
<svg style="left:420px;top:404.5px" width="24" height="24" viewBox="0 0 24 24"><path d="M12.500 9 L16 13 L6 22.500 L2.500 23.500 L.8 22 L.8 19 L3 18.600 L3.400 16.600 L5.600 16.400 L6 14.200 L8.200 14 Z" fill="#f6c545" stroke="#cf9426" stroke-width="1.100" stroke-linejoin="round"/><path d="M13.500 3 L19.500 1.200 L23.200 5.500 L22.200 11.500 L16.500 14.200 L11.200 10 Z" fill="#f8cc54" stroke="#cf9426" stroke-width="1.100" stroke-linejoin="round"/><path d="M14 4 L19 2.500 L21 5" stroke="#fdeeb5" stroke-width="1.300" fill="none"/><circle cx="18.700" cy="6.200" r="1.500" fill="#fdf3cf" stroke="#cf9426" stroke-width=".7"/></svg>
<svg style="left:519.5px;top:405px" width="25" height="25" viewBox="0 0 25 25"><rect x="1" y="1.500" width="21" height="18" rx="1.500" fill="#f5f8fd" stroke="#8fa9cd" stroke-width="1.200"/><path d="M1.600 3 Q1.600 2 3 2 H20 Q21.400 2 21.400 3 V5.800 H1.600Z" fill="#6c9ee0"/><path d="M2 17 H21 V19 H2Z" fill="#dfe8f5"/><path d="M20.500 6.500 L24.500 10.500 L12.500 22 L6.500 24.200 L8.300 18.300 Z" fill="#f6cf66" stroke="#b9812a" stroke-width="1" stroke-linejoin="round"/><path d="M19 8 L23 12" stroke="#e08a6a" stroke-width="1.600"/><path d="M6.500 24.200 L8.300 18.300 L12.500 22 Z" fill="#f2dfc0" stroke="#b9812a" stroke-width=".7"/><path d="M6.500 24.200 L7.400 21.500 L9.200 23.200Z" fill="#5a4a3a"/></svg>
<svg style="left:620px;top:405px" width="26" height="23.5" viewBox="0 0 26 23.500"><rect x="6.500" y="1" width="13" height="10" fill="#fdfdfd" stroke="#9aa3ae" stroke-width="1"/><rect x="1" y="9.500" width="24" height="10.500" rx="2.500" fill="#dfe3e9" stroke="#8d96a3" stroke-width="1.100"/><rect x="5.500" y="12.500" width="15" height="4" fill="#3f97f2"/><rect x="5.500" y="16" width="15" height="6.500" fill="#f4f6f8" stroke="#9aa3ae" stroke-width="1"/><path d="M1.500 17.500 H5 M21 17.500 H24.500" stroke="#aab1bb" stroke-width="1"/></svg>
<svg style="left:742.5px;top:404.5px" width="24" height="24.5" viewBox="0 0 24 24.500"><rect x="4" y="2" width="12" height="21" fill="#707070" stroke="#555" stroke-width="1"/><rect x="6" y="4.500" width="9" height="16" fill="#8a8a8a"/><path d="M14.500 2.500 L23.500 0.500 L23.500 24 L14.500 22.500 Z" fill="#cf9550" stroke="#a06a2c" stroke-width=".8"/><path d="M16 4.500 L22 3.200 L22 21.500 L16 20.500Z" fill="#dba864"/><circle cx="17.200" cy="13" r="1.100" fill="#f7e17a"/><path d="M0 12.500 L6 7 L6 10.300 L12.500 10.300 L12.500 14.700 L6 14.700 L6 18 Z" fill="#55b848" stroke="#2f8a2a" stroke-width=".8" stroke-linejoin="round"/></svg>
<div class="t " style="left:313px;top:456.9px;font-size:24.5px;">编码:</div>
<div class="a" style="left:309px;top:485px;width:1446px;height:27px;background:#7fff00"></div>
<div class="t b" style="left:311px;top:490.3px;font-size:21px;letter-spacing:0.13px">含本单产欠款：1801232.56= 除去本单欠款：1801236.36+本单产生欠款：-3.8</div>
<div class="a gray" style="left:607px;top:445px;width:619px;height:44px;"></div>
<div class="t ar" style="left:615px;top:456.7px;font-size:21px;">CGT20251105001</div>
<div class="t " style="left:313px;top:533.4px;font-size:24.5px;">供应商*</div>
<div class="t " style="left:813px;top:533.4px;font-size:24.5px;">退货仓</div>
<div class="t " style="left:1285px;top:533.4px;font-size:24.5px;">采购员</div>
<div class="t " style="left:313px;top:583.4px;font-size:24.5px;">退货理由</div>
<div class="a cb" style="left:433px;top:521px;width:374px;height:44px;"><div class="a" style="right:0;top:0;width:39px;height:42px;background:#d5e9e8"></div></div>
<div class="t ar" style="left:440px;top:532.3px;font-size:21px;">北京联想</div>
<svg style="left:777.5px;top:537px" width="16" height="12" viewBox="0 0 16 12"><path d="M2 3 L8 9 L14 3" fill="none" stroke="#4aa8e0" stroke-width="2.6" stroke-linecap="round" stroke-linejoin="round"/></svg>
<div class="a cb" style="left:904px;top:521px;width:375px;height:44px;"><div class="a" style="right:0;top:0;width:39px;height:42px;background:#d5e9e8"></div></div>
<div class="t ar" style="left:911px;top:532.3px;font-size:21px;">成品仓库</div>
<svg style="left:1249.5px;top:537px" width="16" height="12" viewBox="0 0 16 12"><path d="M2 3 L8 9 L14 3" fill="none" stroke="#4aa8e0" stroke-width="2.6" stroke-linecap="round" stroke-linejoin="round"/></svg>
<div class="a cb" style="left:1376px;top:521px;width:374px;height:44px;"><div class="a" style="right:0;top:0;width:39px;height:42px;background:#d5e9e8"></div></div>
<div class="t ar" style="left:1383px;top:532.3px;font-size:21px;">管理员</div>
<svg style="left:1720.5px;top:537px" width="16" height="12" viewBox="0 0 16 12"><path d="M2 3 L8 9 L14 3" fill="none" stroke="#4aa8e0" stroke-width="2.6" stroke-linecap="round" stroke-linejoin="round"/></svg>
<div class="a cb" style="left:433px;top:571px;width:1317px;height:44px;"></div>
<div class="a" style="left:307px;top:630px;width:1482px;height:11px;background:#e6eef8;border-left:1px solid #95b8e7;border-right:1px solid #95b8e7"></div>
<div class="a" style="left:308px;top:630px;width:1480px;height:3px;background:#fff"></div>
<div class="a" style="left:308px;top:633px;width:1480px;height:1px;background:#95b8e7"></div>
<div class="a" style="left:307px;top:641px;width:1482px;height:519px;border:1px solid #95b8e7;border-bottom:none;background:#fff"></div>
<div class="a acc" style="left:308px;top:642px;width:1480px;height:46px;border-bottom:1px solid #95b8e7"></div>
<div class="t b nv" style="left:342px;top:654.9px;font-size:21px;">商品资料</div>
<div class="t blue" style="left:348px;top:701.5px;font-size:21px;">增加</div>
<div class="t blue" style="left:449px;top:701.5px;font-size:21px;">查找</div>
<div class="t blue" style="left:549px;top:701.5px;font-size:21px;">导出</div>
<div class="t blue" style="left:649px;top:701.5px;font-size:21px;">列设置</div>
<div class="t blue" style="left:770px;top:701.5px;font-size:21px;">引用采购收货单</div>
<svg style="left:320px;top:699px" width="22" height="22" viewBox="0 0 22 22"><circle cx="11" cy="11" r="10" fill="#aadd9c" stroke="#74ba66" stroke-width="1.200"/><circle cx="11" cy="11" r="7.200" fill="#62bb52"/><path d="M4.500 8 A7 7 0 0 1 17.500 8 Q11 11 4.500 8Z" fill="#93d685" opacity=".8"/><path d="M7 11 H15 M11 7 V15" stroke="#fff" stroke-width="2.300" stroke-linecap="round"/></svg>
<svg style="left:420.5px;top:700.8px" width="20" height="18" viewBox="0 0 20 18"><rect x="2" y="0" width="5.500" height="4" rx="1" fill="#4a4d52"/><rect x="12" y="0" width="5.500" height="4" rx="1" fill="#4a4d52"/><path d="M.3 6 Q.3 3 3 3 H6.500 Q9.200 3 9.200 6 V18 H.3Z" fill="#34373c"/><path d="M10.300 6 Q10.300 3 13 3 H16.500 Q19.200 3 19.200 6 V18 H10.300Z" fill="#34373c"/><rect x="8" y="5" width="3.500" height="5.500" fill="#54575c"/><rect x=".3" y="9.500" width="8.900" height="3.300" fill="#8f949b"/><rect x="10.300" y="9.500" width="8.900" height="3.300" fill="#8f949b"/><path d="M1.500 5 Q2 4 3.500 4 V9 H1.500Z" fill="#6e7278"/><path d="M11.500 5 Q12 4 13.500 4 V9 H11.500Z" fill="#6e7278"/></svg>
<svg style="left:518px;top:698px" width="24" height="24" viewBox="0 0 24 24"><path d="M2.500 .8 H17.500 L23 6.300 V22.500 Q23 23.300 22.200 23.300 H3.300 Q2.500 23.300 2.500 22.500 Z" fill="#cfe1f7" stroke="#4f86d1" stroke-width="1.400" stroke-linejoin="round"/><path d="M4 2.300 H16.500 V7.300 H21.500 V14 H4Z" fill="#e3eefb" opacity=".8"/><path d="M17.500 .8 V6.300 H23 Z" fill="#f2f7fe" stroke="#4f86d1" stroke-width="1" stroke-linejoin="round"/><path d="M16.400 5.500 H11.200 L.7 17 H5.900 Z" fill="#62b050"/><path d="M.7 5.500 H5.900 L16.400 17 H11.200 Z" fill="#3a8f3c"/></svg>
<svg style="left:619px;top:698px" width="25" height="24" viewBox="0 0 25 24"><path d="M4 20 L14.500 9.500" stroke="#5a8ad6" stroke-width="7" stroke-linecap="round"/><path d="M4 20 L14.500 9.500" stroke="#8db5ee" stroke-width="4.800" stroke-linecap="round"/><path d="M4.500 18.500 L12.500 10.500" stroke="#b5d0f5" stroke-width="1.600" stroke-linecap="round"/><path d="M13.500 4 Q15.500 .3 20 .6 L17.300 4.300 L19.300 7.300 L24.300 6 Q24.500 10 20.500 11.800 Q16 13 13.800 9.800 Q12.300 7 13.500 4Z" fill="#bfc5cd" stroke="#878e98" stroke-width="1" stroke-linejoin="round"/></svg>
<svg style="left:741.5px;top:699px" width="23" height="23" viewBox="0 0 23 23"><path d="M18.800 .8 L22.300 4.200 L7.800 19.500 L3.200 16.200 Z" fill="#35a228" stroke="#237a1a" stroke-width="1" stroke-linejoin="round"/><path d="M18.500 2.800 L5.800 16.200" stroke="#86dc70" stroke-width="1.800"/><path d="M3.200 16.200 L7.800 19.500 L1.300 22 Z" fill="#e9d2a6" stroke="#8a7a50" stroke-width=".7"/><path d="M1.300 22 L2.300 19.500 L3.900 20.900Z" fill="#2a2a2a"/></svg>
<div class="t " style="left:312px;top:744.9px;font-size:18px;">条形码:</div>
<div class="a" style="left:609px;top:737px;width:437px;height:32px;border:1px solid #767676;border-radius:4px;background:#fff"></div>
<div class="t " style="left:616px;top:743.5px;font-size:19.9px;color:#777">请将光标对准这里扫码</div>
<div class="a" style="left:308px;top:774px;width:1463px;height:385px;border:1px solid #95b8e7;background:#fff"></div>
<div class="a gh" style="left:309px;top:775px;width:1461px;height:48px;border-bottom:1px solid #ddd"></div>
<div class="a" style="left:309px;top:823px;width:44px;height:47px;background:linear-gradient(90deg,#f9f9f9,#efefef)"></div>
<div class="a" style="left:309px;top:1110px;width:44px;height:47px;background:linear-gradient(90deg,#f9f9f9,#efefef)"></div>
<div class="a" style="left:573px;top:823px;width:97px;height:47px;background:#affcc2"></div>
<div class="a" style="left:573px;top:1110px;width:97px;height:47px;background:#affcc2"></div>
<div class="a" style="left:1102px;top:823px;width:99px;height:47px;background:#affcc2"></div>
<div class="a" style="left:1102px;top:1110px;width:99px;height:47px;background:#affcc2"></div>
<div class="a" style="left:1351px;top:823px;width:119px;height:47px;background:#affcc2"></div>
<div class="a" style="left:1351px;top:1110px;width:119px;height:47px;background:#affcc2"></div>
<div class="a" style="left:1471px;top:823px;width:94px;height:47px;background:#affcc2"></div>
<div class="a" style="left:1471px;top:1110px;width:94px;height:47px;background:#affcc2"></div>
<div class="a" style="left:1635px;top:823px;width:99px;height:47px;background:#affcc2"></div>
<div class="a" style="left:1635px;top:1110px;width:99px;height:47px;background:#affcc2"></div>
<div class="a" style="left:1735px;top:823px;width:35px;height:47px;background:#affcc2"></div>
<div class="a" style="left:1735px;top:1110px;width:35px;height:47px;background:#affcc2"></div>
<div class="a" style="left:309px;top:870px;width:1461px;height:1px;border-top:1px dotted #ccc"></div>
<div class="a" style="left:309px;top:1109px;width:1461px;height:1px;background:#ddd"></div>
<div class="vs" style="left:353px;top:775px;height:96px"></div>
<div class="vs" style="left:353px;top:1110px;height:47px"></div>
<div class="vs" style="left:472px;top:775px;height:96px"></div>
<div class="vs" style="left:472px;top:1110px;height:47px"></div>
<div class="vs" style="left:572px;top:775px;height:96px"></div>
<div class="vs" style="left:572px;top:1110px;height:47px"></div>
<div class="vs" style="left:670px;top:775px;height:96px"></div>
<div class="vs" style="left:670px;top:1110px;height:47px"></div>
<div class="vs" style="left:881px;top:775px;height:96px"></div>
<div class="vs" style="left:881px;top:1110px;height:47px"></div>
<div class="vs" style="left:1001px;top:775px;height:96px"></div>
<div class="vs" style="left:1001px;top:1110px;height:47px"></div>
<div class="vs" style="left:1101px;top:775px;height:96px"></div>
<div class="vs" style="left:1101px;top:1110px;height:47px"></div>
<div class="vs" style="left:1201px;top:775px;height:96px"></div>
<div class="vs" style="left:1201px;top:1110px;height:47px"></div>
<div class="vs" style="left:1350px;top:775px;height:96px"></div>
<div class="vs" style="left:1350px;top:1110px;height:47px"></div>
<div class="vs" style="left:1470px;top:775px;height:96px"></div>
<div class="vs" style="left:1470px;top:1110px;height:47px"></div>
<div class="vs" style="left:1565px;top:775px;height:96px"></div>
<div class="vs" style="left:1565px;top:1110px;height:47px"></div>
<div class="vs" style="left:1634px;top:775px;height:96px"></div>
<div class="vs" style="left:1634px;top:1110px;height:47px"></div>
<div class="vs" style="left:1734px;top:775px;height:96px"></div>
<div class="vs" style="left:1734px;top:1110px;height:47px"></div>
<div class="t " style="left:392px;top:790.5px;font-size:21px;">操作</div>
<div class="t " style="left:579px;top:790.5px;font-size:21px;">编码</div>
<div class="t " style="left:677px;top:790.5px;font-size:21px;">商品名称</div>
<div class="t " style="left:888px;top:790.5px;font-size:21px;">型号规格</div>
<div class="t " style="left:1008px;top:790.5px;font-size:21px;">单位</div>
<div class="t " style="left:1108px;top:790.5px;font-size:21px;">数量</div>
<div class="t " style="left:1244px;top:790.5px;font-size:21px;">尺码表</div>
<div class="t " style="left:1357px;top:790.5px;font-size:21px;">批号</div>
<div class="t " style="left:1476px;top:790.5px;font-size:21px;">单价</div>
<div class="t " style="left:1572px;top:790.5px;font-size:21px;">折扣</div>
<div class="t " style="left:479px;top:789.4px;font-size:21px;letter-spacing:.6px">ID</div>
<svg style="left:510px;top:791px" width="12" height="15" viewBox="0 0 12 15"><path d="M0 6 L6 0 L12 6Z M0 9 L12 9 L6 15Z" fill="#c6c6c6"/></svg>
<div class="t" style="left:1641px;top:790.5px;width:93px;overflow:hidden;letter-spacing:.9px">税率(%)</div>
<div class="t" style="left:1741px;top:790.5px;width:29px;overflow:hidden">含税单价</div>
<div class="t " style="left:325px;top:837.6px;font-size:21px;">1</div>
<div class="t " style="left:480px;top:837.2px;font-size:21px;">16</div>
<div class="t " style="left:579px;top:838.0px;font-size:21px;">100004</div>
<div class="t " style="left:677px;top:838.0px;font-size:21px;">百事可乐</div>
<div class="t " style="left:888px;top:838.0px;font-size:21px;">条</div>
<div class="t " style="left:1008px;top:838.0px;font-size:21px;">罐</div>
<div class="t " style="left:1108px;top:838.0px;font-size:21px;">1.00</div>
<div class="t " style="left:1477px;top:838.0px;font-size:21px;">3.80</div>
<div class="t " style="left:1572px;top:838.0px;font-size:21px;">0</div>
<div class="t " style="left:1641px;top:838.0px;font-size:21px;">0.00</div>
<div class="t" style="left:1741px;top:838.0px;width:29px;overflow:hidden">3.80</div>
<div class="t " style="left:390px;top:842.4px;font-size:19px;">|</div>
<div class="t " style="left:428px;top:842.4px;font-size:19px;">|</div>
<svg style="left:365px;top:834.5px" width="22" height="24" viewBox="0 0 22 24"><ellipse cx="11" cy="22.500" rx="9" ry="2" fill="#d9d9d9"/><path d="M11 .5 L21.500 12.500 L15 12.500 L15 21 L7 21 L7 12.500 L.5 12.500 Z" fill="#4cba2e" stroke="#2f8f1c" stroke-width=".8" stroke-linejoin="round"/><path d="M11 2 L18.500 11 L11 9 L3.500 11Z" fill="#8be070" opacity=".8"/></svg>
<svg style="left:403.5px;top:835px" width="22" height="24" viewBox="0 0 22 24"><ellipse cx="11" cy="23" rx="8" ry="1.800" fill="#d9d9d9"/><path d="M7 .5 L15 .5 L15 9.500 L21.500 9.500 L11 21.500 L.5 9.500 L7 9.500 Z" fill="#4cba2e" stroke="#2f8f1c" stroke-width=".8" stroke-linejoin="round"/><path d="M7.800 1.200 L14.200 1.200 L14.200 8 L7.800 8Z" fill="#8be070" opacity=".8"/></svg>
<svg style="left:437px;top:829px" width="30" height="30" viewBox="0 0 30 30"><rect x="0" y="0" width="30" height="30" fill="#f1f1f1"/><path d="M10 5.500 V2 H19 V5.500" fill="none" stroke="#c8525e" stroke-width="1.800"/><rect x="3" y="5.500" width="23" height="4.500" fill="#e89aa0" stroke="#c8525e" stroke-width="1.300"/><path d="M5.500 10.500 L7.500 27 H17" fill="none" stroke="#c8525e" stroke-width="1.800"/><path d="M23.500 10.500 L22.800 17" fill="none" stroke="#c8525e" stroke-width="1.800"/><path d="M10.500 13 V23.500 M14.500 13 V23.500 M18.500 13 V18" stroke="#c8525e" stroke-width="1.700"/><circle cx="21.800" cy="23.200" r="5.300" fill="#f7e9ea" stroke="#c8525e" stroke-width="1.500"/><path d="M19.600 21 L24 25.400 M24 21 L19.600 25.400" stroke="#c8525e" stroke-width="1.500"/></svg>
<div class="a" style="left:473px;top:1084px;width:1297px;height:25px;background:#f1f1f1"></div>
<div class="a" style="left:498px;top:1086px;width:757px;height:21px;background:#c1c1c1"></div>
<svg style="left:482px;top:1091px" width="8" height="12" viewBox="0 0 8 12"><path d="M7 0V12L0 6Z" fill="#a3a3a3"/></svg>
<svg style="left:1753px;top:1091px" width="8" height="12" viewBox="0 0 8 12"><path d="M0 0V12L7 6Z" fill="#4a4a4a"/></svg>
<div class="t blue" style="left:392px;top:1124.7px;font-size:21px;text-decoration:underline">合计</div>
<div class="t " style="left:1108px;top:1125.0px;font-size:21px;">1.00</div>
<div class="a" style="left:307px;top:1160px;width:1482px;height:60px;border:1px solid #95b8e7;background:#fff"></div>
<div class="t " style="left:313px;top:1177.4px;font-size:24.5px;">制单人</div>
<div class="a gray" style="left:436px;top:1165px;width:240px;height:44px;"></div>
<div class="t ar" style="left:442px;top:1176.2px;font-size:21px;">管理员</div>
<div class="t " style="left:682px;top:1177.4px;font-size:24.5px;">制单时间</div>
<div class="a gray" style="left:805px;top:1165px;width:240px;height:44px;"></div>
<div class="t ar" style="left:812px;top:1175.5px;font-size:21px;">2025-11-05 17:54:07</div>
<div class="t " style="left:1051px;top:1177.4px;font-size:24.5px;">审核人</div>
<div class="a gray" style="left:1174px;top:1165px;width:240px;height:44px;"></div>
<div class="t " style="left:1420px;top:1177.4px;font-size:24.5px;">审核时间</div>
<div class="a gray" style="left:1543px;top:1165px;width:241px;height:44px;"></div>
</body>
</html>
